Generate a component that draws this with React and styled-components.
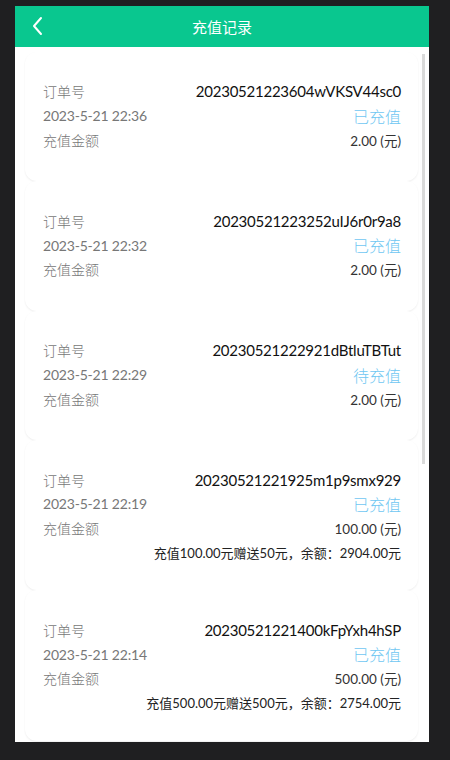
import React from 'react'
import styled, { createGlobalStyle } from 'styled-components'

const GlobalStyle = createGlobalStyle`
  body {
    margin: 0;
    background: #1f1f21;
    font-family: Lato, "Noto Sans CJK SC", sans-serif;
  }
`

const records = [
  { no: '20230521223604wVKSV44sc0', time: '2023-5-21 22:36', status: '已充值', amount: '2.00' },
  { no: '20230521223252uIJ6r0r9a8', time: '2023-5-21 22:32', status: '已充值', amount: '2.00' },
  { no: '20230521222921dBtluTBTut', time: '2023-5-21 22:29', status: '待充值', amount: '2.00' },
  { no: '20230521221925m1p9smx929', time: '2023-5-21 22:19', status: '已充值', amount: '100.00', note: '充值100.00元赠送50元，余额：2904.00元' },
  { no: '20230521221400kFpYxh4hSP', time: '2023-5-21 22:14', status: '已充值', amount: '500.00', note: '充值500.00元赠送500元，余额：2754.00元' },
]

const App = () => {
  return (
    <Screen>
      <GlobalStyle />
      <Phone>
        <Header>
          <Back>
            <svg width="14" height="20" viewBox="0 0 14 20">
              <path d="M10 2 L3 10 L10 18" fill="none" stroke="#fff" strokeWidth="2" strokeLinecap="round" strokeLinejoin="round" />
            </svg>
          </Back>
          <Title>充值记录</Title>
        </Header>
        <List>
          {records.map((r) => (
            <Card key={r.no} $hasNote={!!r.note}>
              <Row>
                <Label>订单号</Label>
                <OrderNo>{r.no}</OrderNo>
              </Row>
              <Row>
                <Time>{r.time}</Time>
                <Status>{r.status}</Status>
              </Row>
              <Row>
                <Label>充值金额</Label>
                <Amount>{r.amount} (元)</Amount>
              </Row>
              {r.note && (
                <Row>
                  <span />
                  <Note>{r.note}</Note>
                </Row>
              )}
            </Card>
          ))}
          <ScrollBar />
        </List>
      </Phone>
    </Screen>
  )
}

export default App

const Screen = styled.div`
  width: 450px;
  height: 760px;
  padding: 6px 0 0 15px;
  box-sizing: border-box;
`
const Phone = styled.div`
  width: 414px;
  height: 736px;
  background: #fff;
  display: flex;
  flex-direction: column;
  overflow: hidden;
`
const Header = styled.div`
  height: 41px;
  flex-shrink: 0;
  background: #09c78f;
  display: flex;
  align-items: center;
  justify-content: center;
  position: relative;
`
const Back = styled.div`
  position: absolute;
  left: 16px;
  top: 10px;
  display: flex;
`
const Title = styled.div`
  color: #fff;
  font-size: 15px;
  font-family: "Noto Sans CJK SC", sans-serif;
`
const List = styled.div`
  flex: 1;
  position: relative;
  padding: 5px 11px 0 10px;
  overflow: hidden;
`
const Card = styled.div`
  background: #fff;
  border-radius: 12px;
  box-shadow: 0 1px 2px rgba(0, 0, 0, 0.07);
  padding: 27px 17px ${(p) => (p.$hasNote ? '25.5px' : '29.3px')} 18px;
`
const Row = styled.div`
  display: flex;
  justify-content: space-between;
  align-items: center;
  height: 24.4px;
`
const Label = styled.span`
  font-size: 14px;
  color: #777;
  font-family: "Noto Sans CJK SC", sans-serif;
  font-weight: 300;
`
const OrderNo = styled.span`
  font-size: 15px;
  letter-spacing: -0.25px;
  color: #111;
`
const Time = styled.span`
  font-size: 14px;
  letter-spacing: -0.2px;
  color: #777;
`
const Status = styled.span`
  font-size: 16px;
  color: #6fc7f2;
  font-family: "Noto Sans CJK SC", sans-serif;
  font-weight: 300;
`
const Amount = styled.span`
  font-size: 13.5px;
  color: #333;
`
const Note = styled.span`
  font-size: 13px;
  color: #222;
`
const ScrollBar = styled.div`
  position: absolute;
  right: 4px;
  top: 7px;
  width: 3px;
  height: 410px;
  background: #dadada;
`
